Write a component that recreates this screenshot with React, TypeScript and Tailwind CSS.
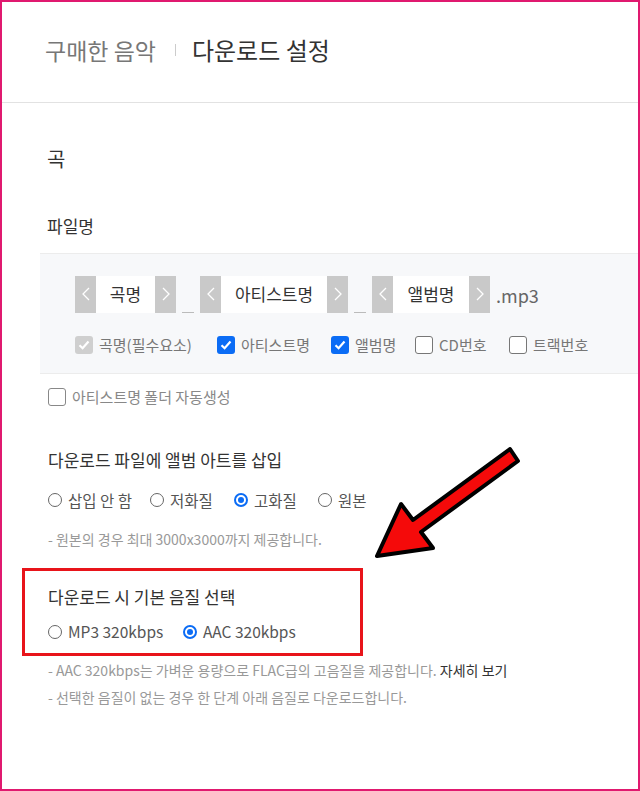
import React from 'react';

const font = { fontFamily: '"Noto Sans CJK KR", "Noto Sans", sans-serif' };

function Selector({ label, width }: { label: string; width: string }) {
  return (
    <div className="flex h-[37px]">
      <div className="flex w-[21px] items-center justify-center bg-[#c9c9c9]">
        <svg width="8" height="14" viewBox="0 0 8 14" fill="none" stroke="#fff" strokeWidth="1.3">
          <path d="M7 1 1 7l6 6" />
        </svg>
      </div>
      <div className={`flex items-center justify-center bg-white text-[17px] text-[#333] ${width}`}>{label}</div>
      <div className="flex w-[21px] items-center justify-center bg-[#c9c9c9]">
        <svg width="8" height="14" viewBox="0 0 8 14" fill="none" stroke="#fff" strokeWidth="1.3">
          <path d="M1 1l6 6-6 6" />
        </svg>
      </div>
    </div>
  );
}

function Underscore() {
  return <div className="mx-[6px] h-[37px] w-[12px] border-b border-[#bbb]" />;
}

function Check({ state, label }: { state: 'on' | 'off' | 'disabled'; label: string }) {
  return (
    <div className="flex items-center gap-[6px]">
      {state === 'off' ? (
        <span className="h-[18px] w-[18px] rounded-[3px] border border-[#777] bg-white" />
      ) : (
        <span
          className={`flex h-[18px] w-[18px] items-center justify-center rounded-[3px] ${
            state === 'on' ? 'bg-[#0b6cf5]' : 'bg-[#cfcfcf]'
          }`}
        >
          <svg width="12" height="10" viewBox="0 0 12 10" fill="none" stroke="#fff" strokeWidth="2.2">
            <path d="M1.5 5.2 4.6 8.2 10.5 1.5" />
          </svg>
        </span>
      )}
      <span className="text-[15px] text-[#777]">{label}</span>
    </div>
  );
}

function Radio({ checked, label }: { checked?: boolean; label: string }) {
  return (
    <div className="flex items-center gap-[6px]">
      {checked ? (
        <span className="flex h-[14px] w-[14px] items-center justify-center rounded-full border-2 border-[#0b6cf5] bg-white">
          <span className="h-[6px] w-[6px] rounded-full bg-[#0b6cf5]" />
        </span>
      ) : (
        <span className="h-[14px] w-[14px] rounded-full border border-[#666] bg-white" />
      )}
      <span className="text-[15.5px] text-[#555]">{label}</span>
    </div>
  );
}

export default function App() {
  return (
    <div style={font} className="relative h-[791px] w-[640px] overflow-hidden border-2 border-[#e0196f] bg-white">
      <div className="flex h-[101px] items-center border-b border-[#e2e2e2] pl-[43px] pb-[4px]">
        <span className="text-[23px] text-[#777]">구매한 음악</span>
        <span className="ml-[19px] mr-[16px] h-[12px] w-px bg-[#ccc]" />
        <span className="text-[24px] text-[#333]">다운로드 설정</span>
      </div>

      <div className="pl-[45px] pt-[41px] text-[20px] text-[#333]">곡</div>
      <div className="pl-[45px] pt-[39px] text-[17px] text-[#333]">파일명</div>

      <div className="ml-[38px] mt-[14px] h-[121px] border-y border-[#ececec] bg-[#f7f8fa] pl-[35px] pt-[22px]">
        <div className="flex items-center">
          <Selector label="곡명" width="w-[59px]" />
          <Underscore />
          <Selector label="아티스트명" width="w-[106px]" />
          <Underscore />
          <Selector label="앨범명" width="w-[76px]" />
          <span className="ml-[6px] pt-[2px] text-[18px] text-[#666]">.mp3</span>
        </div>
        <div className="mt-[21px] flex items-center">
          <div className="w-[142px]">
            <Check state="disabled" label="곡명(필수요소)" />
          </div>
          <div className="w-[114px]">
            <Check state="on" label="아티스트명" />
          </div>
          <div className="w-[84px]">
            <Check state="on" label="앨범명" />
          </div>
          <div className="w-[94px]">
            <Check state="off" label="CD번호" />
          </div>
          <Check state="off" label="트랙번호" />
        </div>
      </div>

      <div className="pl-[46px] pt-[12px]">
        <div className="flex items-center gap-[6px]">
          <span className="h-[18px] w-[18px] rounded-[3px] border border-[#888] bg-white" />
          <span className="text-[15px] text-[#888]">아티스트명 폴더 자동생성</span>
        </div>

        <div className="pt-[39px] text-[17px] text-[#333]">다운로드 파일에 앨범 아트를 삽입</div>
        <div className="mt-[16px] flex items-center">
          <div className="w-[102px]">
            <Radio label="삽입 안 함" />
          </div>
          <div className="w-[84px]">
            <Radio label="저화질" />
          </div>
          <div className="w-[84px]">
            <Radio checked label="고화질" />
          </div>
          <Radio label="원본" />
        </div>
        <div className="mt-[17px] text-[14px] text-[#999]">- 원본의 경우 최대 3000x3000까지 제공합니다.</div>
      </div>

      <div className="ml-[20px] mt-[18px] h-[88px] w-[341px] border-[3px] border-[#e8141a] pl-[23px] pt-[13px]">
        <div className="text-[17px] text-[#333]">다운로드 시 기본 음질 선택</div>
        <div className="mt-[11px] flex items-center">
          <div className="w-[135px]">
            <Radio label="MP3 320kbps" />
          </div>
          <Radio checked label="AAC 320kbps" />
        </div>
      </div>

      <div className="pl-[46px] pt-[1px] text-[14px] leading-[27px] text-[#999]">
        <div>
          - AAC 320kbps는 가벼운 용량으로 FLAC급의 고음질을 제공합니다. <span className="text-[#333]">자세히 보기</span>
        </div>
        <div>- 선택한 음질이 없는 경우 한 단계 아래 음질로 다운로드합니다.</div>
      </div>

      <svg className="pointer-events-none absolute left-[-2px] top-[-2px]" width="640" height="791" viewBox="0 0 640 791">
        <polygon
          points="510,449 413,520 401,504 377,556 433,548 421,532 518,461"
          fill="#f50a0a"
          stroke="#000"
          strokeWidth="4"
          strokeLinejoin="round"
        />
      </svg>
    </div>
  );
}
